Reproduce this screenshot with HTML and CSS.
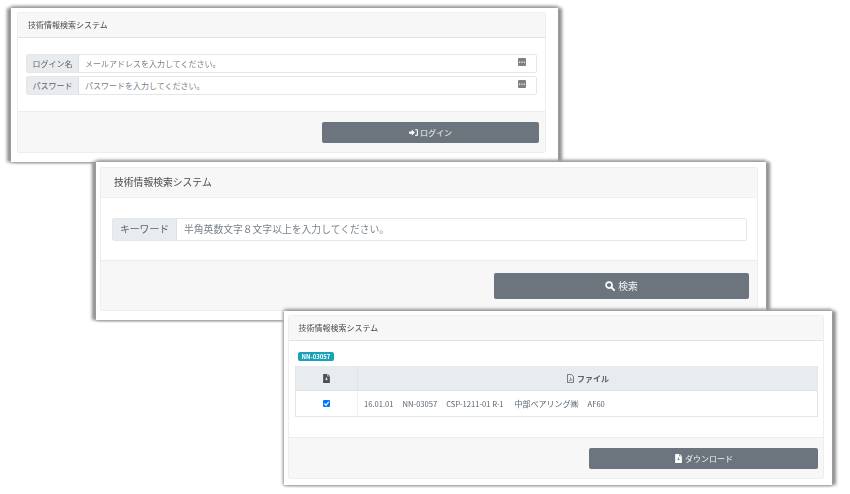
FILE: index.html
```html
<!DOCTYPE html>
<html lang="ja">
<head>
    <meta charset="UTF-8">
    <title>技術情報検索システム</title>
    <link rel="stylesheet" href="styles.css">
</head>
<body>
<!-- login -->
<div class="shot shot-login">
    <div class="card">
        <div class="card-header">技術情報検索システム</div>
        <div class="card-body">
            <div class="input-group">
                <span class="addon">ログイン名</span>
                <span class="field">メールアドレスを入力してください。
                    <svg class="key" viewBox="0 0 8 8"><rect width="8" height="8" rx="1" fill="#808080"/><rect x="1" y="3.600" width="1.200" height="1.200" fill="#fff"/><rect x="3.400" y="3.600" width="1.200" height="1.200" fill="#fff"/><rect x="5.800" y="3.600" width="1.200" height="1.200" fill="#fff"/></svg>
                </span>
            </div>
            <div class="input-group">
                <span class="addon">パスワード</span>
                <span class="field">パスワードを入力してください。
                    <svg class="key" viewBox="0 0 8 8"><rect width="8" height="8" rx="1" fill="#808080"/><rect x="1" y="3.600" width="1.200" height="1.200" fill="#fff"/><rect x="3.400" y="3.600" width="1.200" height="1.200" fill="#fff"/><rect x="5.800" y="3.600" width="1.200" height="1.200" fill="#fff"/></svg>
                </span>
            </div>
        </div>
        <div class="card-footer">
            <div class="btn">
                <svg class="icon" viewBox="0 0 16 14"><path d="M0 5h5V1.500l5.500 5.500-5.500 5.500V9H0z" fill="#fff"/><path d="M11 1h3a2 2 0 0 1 2 2v8a2 2 0 0 1-2 2h-3v-2h3V3h-3z" fill="#fff"/></svg>
                ログイン
            </div>
        </div>
    </div>
</div>

<!-- search -->
<div class="shot shot-search">
    <div class="card">
        <div class="card-header">技術情報検索システム</div>
        <div class="card-body">
            <div class="input-group">
                <span class="addon">キーワード</span>
                <span class="field">半角英数文字８文字以上を入力してください。</span>
            </div>
        </div>
        <div class="card-footer">
            <div class="btn">
                <svg class="icon" viewBox="0 0 16 16"><circle cx="6.500" cy="6.500" r="4.800" fill="none" stroke="#fff" stroke-width="2.600"/><path d="M10 10l4.600 4.600" stroke="#fff" stroke-width="3" stroke-linecap="round"/></svg>
                検索
            </div>
        </div>
    </div>
</div>

<!-- result -->
<div class="shot shot-result">
    <div class="card">
        <div class="card-header">技術情報検索システム</div>
        <div class="card-body">
            <span class="badge">NN-03057</span>
            <div class="table">
                <div class="th th-check">
                    <svg class="icon" viewBox="0 0 12 16"><path d="M0 1a1 1 0 0 1 1-1h6v4h5v11a1 1 0 0 1-1 1H1a1 1 0 0 1-1-1z M8 0l4 3.200H8z" fill="#495057"/><path d="M6 6v4M4 8.500l2 2.500 2-2.500" stroke="#fff" stroke-width="1.400" fill="none"/></svg>
                </div>
                <div class="th">
                    <svg class="icon" viewBox="0 0 12 16"><path d="M1 .7h6.500L11.300 4.500V15.300H.7V.7z" fill="none" stroke="#495057" stroke-width="1.300"/><path d="M3.500 12.500c2-1.500 3-4 2.500-6 1 3 2 4 3 4.500-2-.2-4 .2-5.500 1.500z" fill="none" stroke="#495057" stroke-width=".8"/></svg>
                    ファイル
                </div>
                <div class="td td-check"><span class="check"><svg viewBox="0 0 8 8"><path d="M1.500 4l2 2 3-4" fill="none" stroke="#fff" stroke-width="1.400"/></svg></span></div>
                <div class="td td-name"><span>16.01.01</span><span>NN-03057</span><span>CSP-1211-01 R-1</span><span class="maker">中部ベアリング㈱</span><span>AF60</span></div>
            </div>
        </div>
        <div class="card-footer">
            <div class="btn">
                <svg class="icon" viewBox="0 0 12 16"><path d="M0 1a1 1 0 0 1 1-1h6v4h5v11a1 1 0 0 1-1 1H1a1 1 0 0 1-1-1z M8 0l4 3.200H8z" fill="#fff"/><path d="M6 6v4M4 8.500l2 2.500 2-2.500" stroke="#6c757d" stroke-width="1.400" fill="none"/></svg>
                ダウンロード
            </div>
        </div>
    </div>
</div>
</body>
</html>
```

FILE: styles.css
```css
body {
    margin: 0;
    width: 850px;
    height: 494px;
    overflow: hidden;
    background: #fff;
    font-family: "Noto Sans CJK JP", "Noto Sans", sans-serif;
    color: #5a626a;
}

/* the three screenshots lie on a free canvas */
.shot {
    position: absolute;
    display: flex;
    box-sizing: border-box;
    background: #fff;
    box-shadow: 0 -2px 3px #a0a0a0, 0 1px 2px #a8a8a8, 4px 0 3px #8f8f8f, -4px 0 3px #8f8f8f;
}
.shot-login {
    left: 11px;
    top: 8px;
    width: 547px;
    height: 154px;
    padding: 4px 12px 9px 6px;
    font-size: 8px;
}
.shot-search {
    left: 96px;
    top: 162px;
    width: 670px;
    height: 158px;
    padding: 5px 8px 9px 4px;
    font-size: 9.800px;
}
.shot-result {
    left: 284px;
    top: 311px;
    width: 548px;
    height: 174px;
    padding: 4px 8px 6px 4px;
    font-size: 8px;
    box-shadow: 0 -2px 3px #a0a0a0, 0 1px 2px #a8a8a8, 4px 0 3px #8f8f8f, -1px 0 3px #b0b0b0;
}

.card {
    flex: 1;
    display: flex;
    flex-direction: column;
    border: 1px solid #eeeeee;
    border-radius: 2px;
    filter: blur(.3px);
}
.card-header {
    background: #f7f7f7;
    border-bottom: 1px solid #e2e2e2;
    color: #4a4a4a;
    display: flex;
    align-items: center;
    box-sizing: border-box;
}
.shot-login .card-header { height: 25px; padding: 0 0 1px 10px; }
.shot-search .card-header { height: 30px; padding: 0 0 1px 13px; border-bottom-color: #f0f0f0; }
.shot-result .card-header { height: 25px; padding: 0 0 1px 9.500px; }

.card-body {
    flex: 1;
    display: flex;
    flex-direction: column;
    box-sizing: border-box;
}
.shot-login .card-body { padding: 16px 8px 0 8px; gap: 3px; }
.shot-search .card-body { padding: 20px 10px 0 11px; }
.shot-result .card-body { padding: 11px 5px 0 6px; }

.input-group {
    display: flex;
    border: 1px solid #e6e6e6;
    border-radius: 2px;
    box-sizing: border-box;
}
.shot-login .input-group { height: 19px; }
.shot-search .input-group { height: 23px; }

.addon {
    display: flex;
    align-items: center;
    justify-content: center;
    box-sizing: border-box;
    background: #e9ecef;
    border-right: 1px solid #dcdfe3;
    padding-bottom: 1px;
}
.shot-login .addon { width: 52px; }
.shot-search .addon { width: 64px; }

.field {
    flex: 1;
    display: flex;
    align-items: center;
    justify-content: space-between;
    background: #fff;
    color: #7a828a;
    padding-bottom: 1px;
}
.shot-login .field { padding: 0 10px 1px 6px; }
.shot-search .field { padding-left: 7px; }
.key {
    width: 8px;
    height: 8px;
    margin-bottom: 2px;
}

.card-footer {
    background: #f7f7f7;
    border-top: 1px solid #ececec;
    display: flex;
    justify-content: flex-end;
    box-sizing: border-box;
}
.shot-login .card-footer { height: 41px; padding: 10px 6px 0 0; }
.shot-search .card-footer { height: 50px; padding: 12px 8px 0 0; }
.shot-result .card-footer { height: 41px; padding: 10px 5px 0 0; }

.btn {
    display: flex;
    align-items: center;
    justify-content: center;
    gap: 2px;
    background: #6c757d;
    color: #f4f5f6;
    border-radius: 2px;
    padding-bottom: 1px;
    box-sizing: border-box;
}
.shot-login .btn { width: 217px; height: 21px; }
.shot-search .btn { width: 255px; height: 26px; gap: 3px; }
.shot-result .btn { width: 229px; height: 21px; }

.icon {
    width: 9px;
    height: 9px;
}
.shot-search .icon {
    width: 10px;
    height: 10px;
}

.badge {
    align-self: flex-start;
    background: #17a2b8;
    color: #fff;
    font-size: 6px;
    font-weight: 700;
    line-height: 9px;
    height: 9px;
    padding: 0 3.500px;
    border-radius: 2px;
    margin: 0 0 5px 3px;
}

.table {
    display: grid;
    grid-template-columns: 62px 1fr;
    grid-template-rows: 25px 25px;
    border: 1px solid #e4e6e8;
    border-top: 0;
}
.th {
    display: flex;
    align-items: center;
    justify-content: center;
    gap: 2px;
    background: #e9ecef;
    font-weight: 700;
    border-bottom: 1px solid #dee2e6;
}
.th-check { border-right: 1px solid #dee2e6; }
.td {
    display: flex;
    align-items: center;
}
.td-check {
    justify-content: center;
    border-right: 1px solid #f0f0f0;
}
.td-name {
    padding-left: 6px;
    gap: 9px;
    color: #5b6570;
    font-size: 7.600px;
}
.maker { font-size: 8px; margin-left: 2px; }
.check {
    width: 7px;
    height: 7px;
    background: #0075ff;
    border-radius: 1px;
    display: flex;
}
```
